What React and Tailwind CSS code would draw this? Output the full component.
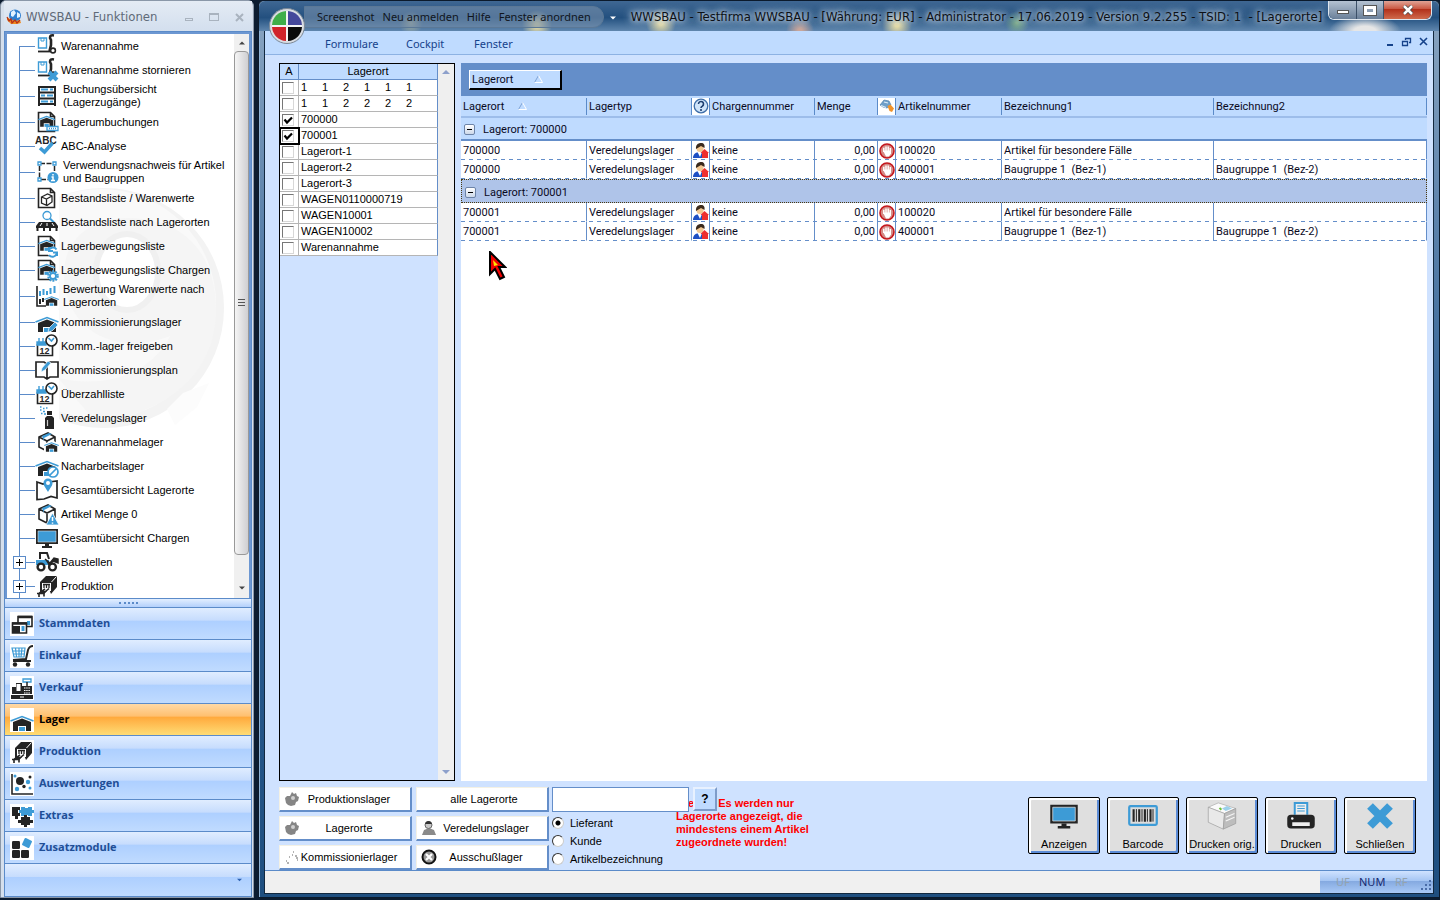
import { useState } from "react";

const K = "#242424";
const B = "#3d9bd6";

/* Shared drawing parts, all on a 24x24 grid */
const Cross = () => (
  <path d="M14 14l8 8M22 14l-8 8" stroke={B} strokeWidth="4" fill="none" />
);

const Truck = () => (
  <>
    <path d="M3.500 4h8v10h-8z" fill="#fff" stroke={B} strokeWidth="1.400" />
    <path d="M6 4v3h3V4" fill="none" stroke={B} strokeWidth="1" />
    <path d="M19 1.500c-3-.500-4 0-4 2.500l1 2v5l-1.500 6" fill="none" stroke={K} strokeWidth="2.600" />
    <path d="M3 17.500h12" stroke={K} strokeWidth="1.800" />
    <circle cx="18" cy="16.500" r="2.400" fill="#fff" stroke={K} strokeWidth="1.600" />
  </>
);

const Page = () => (
  <path d="M3.500 2.500h12l4 4v15h-16zM15.500 2.500v4h4" fill="#fff" stroke={K} strokeWidth="1.600" />
);

const House = ({ t = "" }) => (
  <g transform={t}>
    <path d="M3 13l9-3.500 9 3.500v9h-5v-5H8v5H3z" fill={K} />
    <path d="M.5 12L12 7.500 23.500 12" fill="none" stroke={B} strokeWidth="1.600" />
    <path d="M9 18h6v4H9z" fill={B} />
  </g>
);

const Crate = () => (
  <>
    <path d="M4 7l9-4 7 4v9l-8 5-8-4zM4 7l8 4 8-4M12 11v10" fill="#fff" stroke={K} strokeWidth="1.600" />
    <path d="M7 6l7-3 3 1-8 4v3" fill={B} />
  </>
);

const Calendar = () => (
  <>
    <path d="M2.500 10v11.500h15V11" fill="#fff" stroke={K} strokeWidth="1.600" />
    <path d="M2 8h9v3H2zM4 4v5M8 4v5" fill={B} stroke={B} strokeWidth="1.400" />
    <text x="4.500" y="20" fontSize="9" fontWeight="bold" fontFamily="Liberation Sans" fill={K}>
      12
    </text>
    <circle cx="16.500" cy="6.500" r="5.500" fill="#fff" stroke={K} strokeWidth="1.600" />
    <path d="M13.500 4l3 3L19 4" fill="none" stroke={B} strokeWidth="1.600" />
  </>
);

const Pencil = () => (
  <path d="M13 22l1-4 6-6 3 3-6 6z" fill={B} stroke="#fff" strokeWidth=".7" />
);

const Machine = () => (
  <>
    <path d="M5 8l6-6h11v11l-6 7H5z" fill={K} />
    <path d="M7 9h9v8H7z" fill="#fff" />
    <path d="M16.500 8l5-5.500" stroke="#fff" strokeWidth="1" />
    <path d="M9 10v4M11.500 10v4M14 10v4M8 10.500h7" stroke={K} strokeWidth="1.300" />
    <path d="M14 15l-6 6H2v3h14v-4z" fill="#fff" />
    <path d="M14 14.500l-6 5H3M10 15l-6 4.500v3.500M2 19.500h3M9 18.500v4" fill="none" stroke={K} strokeWidth="1.600" />
  </>
);

const Monitor = () => (
  <>
    <path d="M1 3h22v15H1z" fill={K} />
    <path d="M3 5h18v11H3z" fill={B} stroke="#ddd" strokeWidth=".6" />
    <path d="M10 18h4v2h3v2H7v-2h3z" fill={K} />
  </>
);

const GearBadge = () => (
  <>
    <circle cx="18" cy="18" r="4.600" fill="#fff" stroke={B} strokeWidth="2.400" strokeDasharray="1.800 1.100" />
    <circle cx="18" cy="18" r="3" fill="#fff" stroke={B} strokeWidth="1.800" />
  </>
);

const drawings = {
  receive: <Truck />,
  receiveCancel: (
    <>
      <Truck />
      <Cross />
    </>
  ),
  shelf: (
    <>
      <path d="M4 22V3h16v19M4 8.500h16M4 14.500h16M4 20h16" fill="none" stroke={K} strokeWidth="2" />
      <path d="M6 5.500h7M15 5.500h3M6 11.500h4M12 11.500h6M6 17.500h7M15 17.500h3" stroke={B} strokeWidth="2.200" />
    </>
  ),
  transfer: (
    <>
      <Page />
      <House t="translate(3 1) scale(.72)" />
      <path d="M12 16.500h11v4H12z" fill="#fff" stroke={B} strokeWidth="1.300" />
      <path d="M14 18.500h8" stroke={B} strokeWidth="1.500" strokeDasharray="1 1" />
    </>
  ),
  abc: (
    <>
      <text x="0" y="10" fontSize="10" fontWeight="bold" fontFamily="Liberation Sans" fill={K}>
        ABC
      </text>
      <path d="M5 14l4.500 4 8-9" fill="none" stroke={B} strokeWidth="3.600" />
    </>
  ),
  usage: (
    <>
      <path d="M5 3.500h14M4.500 6v12M6 19.500h7M19.500 6v6" fill="none" stroke={K} strokeWidth="1.500" strokeDasharray="5 1.500" />
      <path d="M3 2h3v3H3zM18 2h3v3h-3zM3 18h3v3H3z" fill="#fff" stroke={B} strokeWidth="1.300" />
      <circle cx="18" cy="17.500" r="5.500" fill={B} />
      <path d="M18 14v1.500M16.500 17h1.500v3.500M16 20.500h4" stroke="#fff" strokeWidth="1.500" fill="none" />
    </>
  ),
  stockValue: (
    <>
      <Page />
      <path d="M6.500 11l6-3 4.500 2v6l-5 3.500-5.500-2.500zM6.500 11l5 2 5.500-3M11.500 13v6" fill="#fff" stroke={K} strokeWidth="1.300" />
    </>
  ),
  stockPlace: (
    <>
      <circle cx="12" cy="5.500" r="4" fill="#fff" stroke={B} strokeWidth="1.300" />
      <path d="M15 8.500l4 4" stroke={B} strokeWidth="2" />
      <path d="M4 12h16l3 4v2H1v-2z" fill={K} />
      <path d="M7 13l-2 3M12 13v3M17 13l2 3" stroke="#fff" strokeWidth="1" />
      <path d="M2.500 18v3M9 18v3M15 18v3M21.500 18v3" stroke={K} strokeWidth="2" />
    </>
  ),
  moves: (
    <>
      <Page />
      <House t="translate(3 1) scale(.72)" />
      <circle cx="18" cy="18" r="5.500" fill="#fff" />
      <path d="M13.500 17a4.500 4.500 0 0 1 8-1.500M22 19a4.500 4.500 0 0 1-8 2M14 13v4h4M22 22v-3.500h-4" fill="none" stroke={B} strokeWidth="2" />
    </>
  ),
  movesBatch: (
    <>
      <Page />
      <House t="translate(3 1) scale(.72)" />
      <GearBadge />
    </>
  ),
  valuation: (
    <>
      <path d="M2 2v20h9" fill="none" stroke={K} strokeWidth="1.600" />
      <path d="M5 7v5M8.500 5v6M12 7v4M15.500 4v6M19.500 2v7" stroke={B} strokeWidth="2" />
      <path d="M5 15v5M8 14v4" stroke={K} strokeWidth="2" />
      <House t="translate(9 8) scale(.63)" />
    </>
  ),
  picking: (
    <>
      <House />
      <Pencil />
    </>
  ),
  calendar: <Calendar />,
  plan: (
    <>
      <path d="M1 4h8l3 2 3-2h8v15h-8l-3 2-3-2H1zM12 6v14" fill="#fff" stroke={K} strokeWidth="1.700" />
      <path d="M6 14l1-4 6-7 3 2-6 7z" fill={B} stroke="#fff" strokeWidth=".7" />
    </>
  ),
  spray: (
    <>
      <path d="M10 12l2-2h5l2 2v11h-9z" fill={K} />
      <path d="M12 5h5v4h-5z" fill={K} />
      <path d="M12.500 14v6" stroke="#ccc" strokeWidth="1.200" />
      <path d="M5 1h1.500M8 2.500h1.500M5 4h1.500M8 5.500h2M6 7.500h1.500M9 8h2M11 2h1.500" stroke={B} strokeWidth="1.500" />
    </>
  ),
  crateHouse: (
    <>
      <Crate />
      <path d="M9 14l8-4 7 4v10H9z" fill="#fff" />
      <House t="translate(9 8) scale(.63)" />
    </>
  ),
  rework: (
    <>
      <House />
      <circle cx="18" cy="18" r="5" fill="#fff" stroke={B} strokeWidth="1.700" />
      <path d="M14.500 21.500l7-7" stroke={B} strokeWidth="1.700" />
    </>
  ),
  map: (
    <>
      <path d="M2 4l6 2 6-2 8-1v17l-6-1.500-7 2.500-7 .500z" fill="#fff" stroke={K} strokeWidth="1.700" />
      <path d="M13 14C10 9 8.500 7.500 8.500 5a4.500 4.500 0 0 1 9 0c0 2.500-1.500 4-4.500 9z" fill={B} />
      <circle cx="13" cy="5" r="2" fill="#fff" />
    </>
  ),
  crateAlert: (
    <>
      <Crate />
      <path d="M17.500 11l6.500 12H11z" fill={B} stroke="#fff" strokeWidth=".8" />
      <path d="M17.500 15v4M17.500 20.500v1.200" stroke="#fff" strokeWidth="1.500" />
    </>
  ),
  monitor: <Monitor />,
  loader: (
    <>
      <path d="M5 9V3h7l2 6" fill="#fff" stroke={K} strokeWidth="2" />
      <path d="M1 10h13v5H1z" fill={B} />
      <path d="M10 9l5 4 4-5 4 1v4l-5-2-4 5" fill={K} stroke={K} strokeWidth="1.500" />
      <circle cx="6" cy="17" r="3.400" fill="#fff" stroke={K} strokeWidth="2.400" />
      <circle cx="17.500" cy="17" r="3.400" fill="#fff" stroke={K} strokeWidth="2.400" />
    </>
  ),
  machine: <Machine />,
  cards: (
    <>
      <path d="M8 4.500h14v10H8z" fill="#fff" stroke={K} strokeWidth="1.600" />
      <path d="M8 5h14" stroke={K} strokeWidth="2.500" />
      <path d="M17 9h3v4h-3z" fill={B} />
      <path d="M2.500 11h14v10h-14z" fill="#fff" stroke={K} strokeWidth="1.600" />
      <path d="M2 11.500h15" stroke={K} strokeWidth="2.500" />
      <path d="M3 14h7v7H3z" fill={K} />
      <path d="M11.500 14h3v5h-3z" fill={B} />
    </>
  ),
  cart: (
    <>
      <path d="M2 4h13l-1 9H4zM5.500 4l1 9M9 4v9M12 4l-1 9M2 7h13M3 10h12" fill="none" stroke={B} strokeWidth="1.200" />
      <path d="M23 2c-3 0-4 1-5 4l-2 9-13 1M3 17h18" fill="none" stroke={K} strokeWidth="2" />
      <circle cx="5" cy="20.500" r="2.200" fill={K} />
      <circle cx="18" cy="20.500" r="2.200" fill={K} />
    </>
  ),
  register: (
    <>
      <path d="M13 3h8v3h-8z" fill="#fff" stroke={B} strokeWidth="1.300" />
      <path d="M17 6v4" stroke={K} strokeWidth="1.500" />
      <path d="M2 11h4V7h6v3h10v8H2zM1 19h22v4H1z" fill={K} />
      <path d="M6.500 8h4v7h-4z" fill="#fff" />
      <path d="M14 12h6M14 14.500h6M14 17h6" stroke="#fff" strokeWidth="1.200" strokeDasharray="1.500 .700" />
      <path d="M10 21h4" stroke="#fff" strokeWidth="1" />
    </>
  ),
  house: <House t="translate(0 1)" />,
  scatter: (
    <>
      <path d="M2 2v20h21" fill="none" stroke={K} strokeWidth="1.600" />
      <circle cx="10" cy="9" r="4" fill={K} />
      <circle cx="14" cy="14.500" r="1.700" fill={K} />
      <circle cx="20" cy="5" r="1.500" fill={K} />
      <circle cx="18" cy="10" r="2.200" fill={B} />
      <circle cx="7" cy="17" r="2.200" fill={B} />
      <circle cx="5" cy="4" r="1.500" fill={B} />
      <circle cx="20" cy="16" r="1.500" fill={B} />
    </>
  ),
  puzzle: (
    <>
      <path d="M2 3h8v3H8v3h2v3H8v3H5v-3H2z" fill={K} />
      <path d="M11 3h4v1h3V3h4v3h2v3h-2v3h-4v-1h-3v1h-4V9H9V6h2z" fill={B} />
      <path d="M11 13h3v-2h3v2h3v3h3v3h-3v2h-3v2h-3v-2h-3v-2H8v-3h3z" fill={K} />
    </>
  ),
  modules: (
    <>
      <rect x="2" y="5" width="8" height="8" rx="1.200" fill={K} />
      <rect x="2" y="14" width="8" height="8" rx="1.200" fill={K} />
      <rect x="11" y="14" width="8" height="8" rx="1.200" fill={K} />
      <rect x="13" y="3" width="8" height="8" rx="1" fill={B} transform="rotate(25 17 7)" />
    </>
  ),
  barcode: (
    <>
      <rect x="1" y="4" width="22" height="15" rx="1" fill="#ddd" stroke={B} strokeWidth="1.800" />
      <path d="M4.500 6.500v10M9 6.500v10M13.500 6.500v10M18 6.500v10" stroke={K} strokeWidth="1.700" />
      <path d="M6.700 6.500v10M11.200 6.500v10M15.500 6.500v10M20 6.500v10" stroke={K} strokeWidth=".8" />
    </>
  ),
  printer: (
    <>
      <path d="M7 11V1.500h10V11" fill="#eee" stroke={B} strokeWidth="1.600" />
      <path d="M9 4h6M9 6h6M9 8h6" stroke={B} strokeWidth=".9" />
      <rect x="1" y="11" width="22" height="11" rx="3" fill={K} />
      <path d="M5 17h14v3H5z" fill="#eee" />
      <circle cx="5" cy="14" r="1" fill="#fff" />
    </>
  ),
  laser: (
    <>
      <path d="M1 5l8-3.500L23 6v12l-10 4.500L1 17z" fill="#c9c9c9" />
      <path d="M1 5l8-3.500L23 6l-9 4z" fill="#fafafa" stroke="#aaa" strokeWidth=".5" />
      <path d="M1 5l13 5-1 12.500L1 17z" fill="#e9e9e9" stroke="#999" strokeWidth=".5" />
      <path d="M14 10l9-4v12l-10 4.500z" fill="#bdbdbd" stroke="#999" strokeWidth=".5" />
      <path d="M12 6l4-2 4 2-5 2z" fill="#9cd0ea" />
      <path d="M15 13l7-3M15 16l7-3" stroke="#f5f5f5" strokeWidth="1" />
      <path d="M10 5.500l1.500 1.500" stroke="#6cbf3a" strokeWidth="1.600" />
    </>
  ),
  close: <path d="M4 4l16 16M20 4L4 20" stroke={B} strokeWidth="6.500" />,
};

const Icon = ({ name, className }) => (
  <svg viewBox="0 0 24 24" className={className} aria-hidden="true">
    {drawings[name]}
  </svg>
);

const functions = [
  { label: ["Warenannahme"], icon: "receive" },
  { label: ["Warenannahme stornieren"], icon: "receiveCancel" },
  { label: ["Buchungsübersicht", "(Lagerzugänge)"], icon: "shelf" },
  { label: ["Lagerumbuchungen"], icon: "transfer" },
  { label: ["ABC-Analyse"], icon: "abc" },
  { label: ["Verwendungsnachweis für Artikel", "und Baugruppen"], icon: "usage" },
  { label: ["Bestandsliste / Warenwerte"], icon: "stockValue" },
  { label: ["Bestandsliste nach Lagerorten"], icon: "stockPlace" },
  { label: ["Lagerbewegungsliste"], icon: "moves" },
  { label: ["Lagerbewegungsliste Chargen"], icon: "movesBatch" },
  { label: ["Bewertung Warenwerte nach", "Lagerorten"], icon: "valuation" },
  { label: ["Kommissionierungslager"], icon: "picking" },
  { label: ["Komm.-lager freigeben"], icon: "calendar" },
  { label: ["Kommissionierungsplan"], icon: "plan" },
  { label: ["Überzahlliste"], icon: "calendar" },
  { label: ["Veredelungslager"], icon: "spray" },
  { label: ["Warenannahmelager"], icon: "crateHouse" },
  { label: ["Nacharbeitslager"], icon: "rework" },
  { label: ["Gesamtübersicht Lagerorte"], icon: "map" },
  { label: ["Artikel Menge 0"], icon: "crateAlert" },
  { label: ["Gesamtübersicht Chargen"], icon: "monitor" },
  { label: ["Baustellen"], icon: "loader", node: true },
  { label: ["Produktion"], icon: "machine", node: true },
];

const modules = [
  { label: "Stammdaten", icon: "cards" },
  { label: "Einkauf", icon: "cart" },
  { label: "Verkauf", icon: "register" },
  { label: "Lager", icon: "house" },
  { label: "Produktion", icon: "machine" },
  { label: "Auswertungen", icon: "scatter" },
  { label: "Extras", icon: "puzzle" },
  { label: "Zusatzmodule", icon: "modules" },
];

const places = [
  ["1", "1", "2", "1", "1", "1"],
  ["1", "1", "2", "2", "2", "2"],
  "700000",
  "700001",
  "Lagerort-1",
  "Lagerort-2",
  "Lagerort-3",
  "WAGEN0110000719",
  "WAGEN10001",
  "WAGEN10002",
  "Warenannahme",
];

const groups = [
  {
    place: "700000",
    rows: [
      ["100020", "Artikel für besondere Fälle", ""],
      ["400001", "Baugruppe 1  (Bez-1)", "Baugruppe 1  (Bez-2)"],
    ],
  },
  {
    place: "700001",
    rows: [
      ["100020", "Artikel für besondere Fälle", ""],
      ["400001", "Baugruppe 1  (Bez-1)", "Baugruppe 1  (Bez-2)"],
    ],
  },
];

const AppLogo = () => (
  <svg viewBox="0 0 16 16" className="h-4 w-4 shrink-0">
    <circle cx="9" cy="6.500" r="6" fill="#2f7fd0" />
    <path d="M5 3l3-2 2 3-3 4-2-1zM11 3l3 2v3l-3 1z" fill="#e3f2ff" />
    <path d="M1 8l3 2 5 2 5-1 1 3-4 1-6 0-4-4z" fill="#f08a1c" />
    <path d="M1 8l2 4 2-2 1 4 3-3 2 3 3-3" fill="none" stroke="#b5301a" strokeWidth="1.200" />
  </svg>
);

const Watermark = () => (
  <svg viewBox="51 0 172 567" className="absolute top-0 left-[51px] h-[567px] w-[172px]">
    <circle cx="97" cy="274" r="120" fill="#f3f3f3" />
    <circle cx="94" cy="270" r="115" fill="#f9f9f9" />
    <path d="M121 184c54 0 88 34 88 92 0 64-50 104-120 112l-38-44c52 12 96-8 112-42-56 22-106-8-106-62 0-34 26-56 64-56z" fill="#f5f5f5" />
    <ellipse cx="120" cy="238" rx="31" ry="38" fill="#fff" stroke="#f0f0f0" strokeWidth="6" />
    <path d="M160 375l16-16 26-10-12 24-22 18z" fill="#fcfcfc" />
  </svg>
);

const TreeRow = ({ item, first }) => (
  <li className={`flex shrink-0 items-center ${item.label.length > 1 ? "h-7" : "h-6"}`}>
    <div className="flex h-full w-7 shrink-0 flex-col pl-3">
      <div className={`flex-1 ${first ? "" : "border-l border-[#5b8bc9]"}`} />
      <div className="border-t border-[#5b8bc9]" />
      <div className="flex-1 border-l border-[#5b8bc9]" />
    </div>
    {item.node && (
      <button
        type="button"
        aria-label={`${item.label[0]} öffnen`}
        className="relative -ml-[22px] mr-[9px] flex h-[13px] w-[13px] shrink-0 items-center justify-center border border-[#5b8bc9] bg-white"
      >
        <svg viewBox="0 0 7 7" className="h-[7px] w-[7px] shrink-0">
          <path d="M0 3.500h7M3.500 0v7" stroke="#000" />
        </svg>
      </button>
    )}
    <a href="#" className="relative flex items-center whitespace-pre">
      <Icon name={item.icon} className="h-6 w-6 bg-white" />
      <span className={`leading-[13px] ${item.label.length > 1 ? "pl-1" : "pl-[2px]"}`}>
        {item.label.join("\n")}
      </span>
    </a>
  </li>
);

const Arrow = ({ up, className = "w-2" }) => (
  <svg viewBox="0 0 8 4" className={`h-1 ${className}`}>
    <path d={up ? "M0 4l4-4 4 4z" : "M0 0h8L4 4z"} fill="currentColor" />
  </svg>
);

const FunctionsWindow = () => {
  const [active, setActive] = useState("Lager");

  return (
    <aside className="flex w-[254px] shrink-0 flex-col rounded-t-md border border-[#8a97a8] bg-[#d5dfec] pr-px pl-[3px]">
      <header className="flex h-[30px] shrink-0 items-center bg-linear-to-b from-[#e4ebf4] to-[#d3dfee] px-[2px] pt-[2px] text-[13px] text-[#5f6a78] [font-family:'DejaVu_Sans_Condensed','DejaVu_Sans',sans-serif]">
        <AppLogo />
        <h1 className="flex-1 pl-1">WWSBAU - Funktionen</h1>
        <div className="flex items-center gap-4 pr-[6px] text-[#a9b3bf]">
          <button type="button" aria-label="Minimieren" className="mt-1 h-[3px] w-2 border border-current" />
          <button type="button" aria-label="Maximieren" className="h-2 w-[10px] border border-t-2 border-current" />
          <button type="button" aria-label="Schließen">
            <svg viewBox="0 0 9 9" className="h-[9px] w-[9px]">
              <path d="M1 1l7 7M8 1L1 8" stroke="currentColor" strokeWidth="2" />
            </svg>
          </button>
        </div>
      </header>

      <div className="flex min-h-0 flex-1 flex-col border border-[#5b8bc9]">
        <div className="flex min-h-0 flex-1 border-2 border-[#6c97d2] border-b-0 bg-white">
          <div className="relative min-w-0 flex-1 overflow-hidden">
            <Watermark />
            <ul className="relative flex flex-col text-[11px] text-black">
              {functions.map((item, i) => (
                <TreeRow key={item.icon + i} item={item} first={i === 0} />
              ))}
            </ul>
          </div>
          <div className="flex w-[15px] shrink-0 flex-col items-center bg-[#f0f0f0] text-[#444]">
            <div className="flex h-[17px] items-center">
              <Arrow up className="w-[6px]" />
            </div>
            <div className="flex w-full flex-1 flex-col items-center justify-center gap-px rounded-sm border border-[#999] bg-linear-to-r from-[#f5f5f5] to-[#cfcfd2]">
              <i className="h-[2px] w-[7px] border-t border-[#555]" />
              <i className="h-[2px] w-[7px] border-t border-[#555]" />
              <i className="h-[2px] w-[7px] border-t border-[#555]" />
            </div>
            <div className="flex h-[43px] items-end pb-2">
              <Arrow className="w-[6px]" />
            </div>
          </div>
        </div>

        <div className="flex h-[9px] shrink-0 items-center justify-center border-t border-[#5b8bc9] bg-linear-to-b from-[#e3efff] to-[#b3d0fb]">
          <i className="w-[19px] border-t-2 border-dotted border-[#5b8bc9]" />
        </div>

        <nav className="flex shrink-0 flex-col text-[11px] font-bold [font-family:'Open_Sans',sans-serif]">
          {modules.map(({ label, icon }) => (
            <button
              key={label}
              type="button"
              onClick={() => setActive(label)}
              className={`flex h-8 items-center gap-[5px] border-t border-[#5b8bc9] pl-[5px] text-left ${
                active === label
                  ? "bg-[linear-gradient(#ffd9a6,#ffbf6e_40%,#ffa83b_41%,#fedc75)] text-black"
                  : "bg-[linear-gradient(#e0edff,#c6dcfd_40%,#adcfff_41%,#c0dbff)] text-[#1f4e96]"
              }`}
            >
              <Icon name={icon} className="h-6 w-6 bg-white" />
              {label}
            </button>
          ))}
          <div className="flex h-[33px] items-center justify-end border-t border-[#5b8bc9] bg-[linear-gradient(#e0edff,#c6dcfd_40%,#adcfff_41%,#c0dbff)] pr-[9px] text-[#2f62b0]">
            <Arrow className="w-[5px]" />
          </div>
        </nav>
      </div>
    </aside>
  );
};

const Orb = () => (
  <svg viewBox="0 0 36 36" className="absolute top-[7px] left-[10px] z-10 h-9 w-9">
    <circle cx="18" cy="18" r="17.500" fill="#d9dde3" stroke="#7b8896" />
    <circle cx="18" cy="18" r="15" fill="#f4f4f4" />
    <path d="M17 3v14H3A15 15 0 0 1 17 3z" fill="#3fae49" />
    <path d="M19 3v14h14A15 15 0 0 0 19 3z" fill="#45489b" />
    <path d="M17 33V19H3a15 15 0 0 0 14 14z" fill="#d0232a" />
    <path d="M19 33V19h14a15 15 0 0 1-14 14z" fill="#0b0b0b" />
  </svg>
);

const TitleBar = () => (
  <header className="relative flex h-[30px] shrink-0 items-start rounded-t-md bg-[radial-gradient(circle_at_152px_22px,#d8cf9a99_0,transparent_12px),radial-gradient(circle_at_278px_24px,#e3d9a4_2px,transparent_15px),radial-gradient(circle_at_402px_22px,#e3d9a4_2px,transparent_15px),radial-gradient(circle_at_541px_30px,#c9a59a_2px,transparent_14px),radial-gradient(circle_at_638px_24px,#e3d9a4_2px,transparent_15px),radial-gradient(circle_at_758px_22px,#7fae8a_0,transparent_12px),radial-gradient(ellipse_36px_16px_at_1106px_30px,#e6e6e6_30%,transparent),linear-gradient(#3f6793,#23507f_55%,#5f86ae)] [font-family:'DejaVu_Sans_Condensed','DejaVu_Sans',sans-serif]">
    <Orb />
    <div className="mt-[5px] ml-[45px] flex h-[22px] items-center gap-2 rounded-r-full border border-[#5b7896] bg-[#7790ac]/60 pr-3 pl-3 text-[11px] text-[#10151c] [font-family:'Noto_Sans',sans-serif]">
      <button type="button">Screenshot</button>
      <button type="button">Neu anmelden</button>
      <button type="button">Hilfe</button>
      <button type="button">Fenster anordnen</button>
    </div>
    <Arrow className="mt-[15px] ml-[6px] w-[6px] text-white" />
    <h1 className="mt-[6px] ml-[15px] min-w-0 flex-1 text-[13px] leading-[19px] whitespace-pre text-[#0d1116] [text-shadow:0_0_5px_#c8d6e6,0_0_8px_#c8d6e6,0_0_10px_#c8d6e6]">
      {"WWSBAU - Testfirma WWSBAU - [Währung: EUR] - Administrator - 17.06.2019 - Version 9.2.255 - TSID: 1  - [Lagerorte]"}
    </h1>
    <div className="mr-[7px] flex h-[19px] shrink-0 rounded-b-md border border-t-0 border-[#dfe6ee]">
      <button type="button" aria-label="Minimieren" className="flex w-7 items-center justify-center rounded-bl-md border-r border-[#3c5068] bg-linear-to-b from-[#b4c2d2] to-[#6b8099]">
        <i className="mt-1 h-1 w-3 border border-[#555] bg-white" />
      </button>
      <button type="button" aria-label="Maximieren" className="flex w-[27px] items-center justify-center border-r border-[#3c5068] bg-linear-to-b from-[#b4c2d2] to-[#6b8099]">
        <i className="h-[9px] w-3 border-[3px] border-white outline outline-[#555]" />
      </button>
      <button type="button" aria-label="Schließen" className="flex w-[47px] items-center justify-center rounded-br-md bg-[linear-gradient(#e0a395,#c9553f_45%,#b2301a_46%,#cf6a4c)]">
        <svg viewBox="0 0 12 10" className="h-[10px] w-3">
          <path d="M2 1l8 8M10 1L2 9" stroke="#444" strokeWidth="4" />
          <path d="M2 1l8 8M10 1L2 9" stroke="#fff" strokeWidth="2.500" />
        </svg>
      </button>
    </div>
  </header>
);

const MenuBar = () => (
  <nav className="flex h-6 shrink-0 items-center border-b border-[#8db2e3] bg-[#bfdbff] pt-[3px] pl-[60px] text-[11px] text-[#15428b] [font-family:'Noto_Sans',sans-serif]">
    <button type="button" className="w-[81px] text-left">Formulare</button>
    <button type="button" className="w-[68px] text-left">Cockpit</button>
    <button type="button" className="flex-1 text-left">Fenster</button>
    <svg viewBox="0 0 42 10" className="mr-1 mb-1 h-[10px] w-[42px]">
      <path d="M0 8h6" stroke="#15428b" strokeWidth="2" />
      <path d="M18.500 3V1.500h5v4H22M15.500 4.500h5v4h-5zM18 1.500h6M15 4.500h6" fill="none" stroke="#15428b" strokeWidth="1.300" />
      <path d="M33 1l7 7M40 1l-7 7" stroke="#15428b" strokeWidth="1.600" />
    </svg>
  </nav>
);

const PlaceList = () => {
  const [checked, setChecked] = useState(["700000", "700001"]);

  const toggle = (name) =>
    setChecked((old) => (old.includes(name) ? old.filter((n) => n !== name) : [...old, name]));

  return (
    <div className="flex w-44 shrink-0 border border-black bg-[#cfe2ff]">
      <div className="flex-1">
        <table className="w-full table-fixed border-separate border-spacing-0 text-[11px] leading-[15px] text-black">
          <colgroup>
            <col className="w-[19px]" />
            <col />
          </colgroup>
          <thead>
            <tr className="bg-[#bfdbff]">
              <th className="h-4 border-r border-b border-[#648ec9] p-0 font-normal">A</th>
              <th className="h-4 border-r border-b border-[#648ec9] p-0 font-normal">Lagerort</th>
            </tr>
          </thead>
          <tbody>
            {places.map((place, i) => {
              const name = Array.isArray(place) ? place.join(" ") : place;
              return (
                <tr key={name} className="bg-white">
                  <td className={`h-4 border-r border-b border-[#b5b5b5] p-0 ${i === 3 ? "outline-2 -outline-offset-1 outline-black" : ""}`}>
                    <input
                      type="checkbox"
                      id={`place-${i}`}
                      checked={checked.includes(name)}
                      onChange={() => toggle(name)}
                      className="peer sr-only"
                    />
                    <label
                      htmlFor={`place-${i}`}
                      aria-label={name}
                      className="ml-[2px] block h-3 w-3 border border-[#d8d8d8] border-t-[#777] border-l-[#777] bg-white text-transparent peer-checked:text-black"
                    >
                      <svg viewBox="0 0 10 10" className="h-[10px] w-[10px]">
                        <path d="M1.500 4.500l2.500 3 5-5" fill="none" stroke="currentColor" strokeWidth="2.200" />
                      </svg>
                    </label>
                  </td>
                  <td className="h-4 border-r border-b border-[#b5b5b5] border-r-[#648ec9] p-0 pl-[2px]">
                    {Array.isArray(place) ? (
                      <div className="flex">
                        {place.map((n, j) => (
                          <span key={j} className="w-[21px]">{n}</span>
                        ))}
                      </div>
                    ) : (
                      place
                    )}
                  </td>
                </tr>
              );
            })}
          </tbody>
        </table>
      </div>
      <div className="flex w-4 shrink-0 flex-col items-center justify-between bg-[#efefef] py-[6px] text-[#8da0cb]">
        <Arrow up />
        <Arrow />
      </div>
    </div>
  );
};

const SortMark = ({ className = "" }) => (
  <svg viewBox="0 0 9 8" className={`inline-block h-2 w-[9px] ${className}`}>
    <path d="M.5 7.500L4.500.5" stroke="#7fa3d6" />
    <path d="M4.500.5l4 7h-8" fill="none" stroke="#fff" />
  </svg>
);

const Person = () => (
  <svg viewBox="0 0 16 16" className="mx-auto h-4 w-4">
    <path d="M0 15c0-4 3-6 7-6s6 2 6 6z" fill="#1d4fc4" />
    <path d="M4.500 9l2.500 5 2-5z" fill="#fff" />
    <circle cx="7" cy="5.500" r="3.500" fill="#f3c892" />
    <path d="M3 6C2.500 2 5 0 8 0s4 2 3.500 5L8 3z" fill="#3a2a1c" />
    <path d="M11.500 6l4.500 4h-1v5h-6v-5H7.500z" fill="#ee2f2f" />
  </svg>
);

const Hand = () => (
  <svg viewBox="0 0 16 16" className="mx-auto h-4 w-4">
    <circle cx="8" cy="8" r="7" fill="#d58a85" stroke="#c4161c" strokeWidth="1.600" />
    <path d="M4.800 9V4.800M7 8V3.500M9.200 8V3.500M11.300 8.500V5" stroke="#fff" strokeWidth="1.500" />
    <path d="M4 7.500h8v3l-2 3H7z" fill="#fff" />
  </svg>
);

const HelpIcon = () => (
  <svg viewBox="0 0 16 16" className="mx-auto h-4 w-4">
    <circle cx="8" cy="8" r="6.800" fill="#cfe4fa" stroke="#3f6ea8" strokeWidth="1.300" />
    <path d="M5.500 6a2.500 2.500 0 1 1 4 2c-1 .8-1.500 1-1.500 2M8 11v2" fill="none" stroke="#1e3f70" strokeWidth="1.600" />
  </svg>
);

const TagIcon = () => (
  <svg viewBox="0 0 16 16" className="mx-auto h-4 w-4">
    <path d="M1 7l4-5 5 1 2 4-4 3-4-1z" fill="#6f9fc8" stroke="#4c7fae" strokeWidth=".7" />
    <path d="M8.500 8l3-1.500 3.500 4-2 3.500-2.500-1z" fill="#f0932b" />
    <path d="M2 7.500l5 2M5 4l4 1" stroke="#dcecf8" strokeWidth="1.200" />
  </svg>
);

const columnHead = "h-[22px] border-b-2 border-[#9dbdea] p-0 text-left font-normal";
const headCell = "flex h-[17px] items-center border-r border-[#5b8bc9] pl-[2px]";
const cell = "h-[19px] border-r border-b border-[#648ec9] border-b-transparent p-0 pl-[2px]";

const StockGrid = () => (
  <div className="min-w-0 flex-1 overflow-hidden bg-white text-[11px] leading-[15px] text-[#0a0a1e] [font-family:'Roboto',sans-serif]">
    <div className="flex h-[33px] items-center bg-[#648ec9] pl-2">
      <button type="button" className="flex h-5 w-[93px] items-center justify-between border border-r-2 border-b-2 border-white border-r-black border-b-black bg-[#bfdbff] pr-[17px] pl-[2px]">
        Lagerort
        <SortMark />
      </button>
    </div>
    <table className="w-full table-fixed border-separate border-spacing-0 whitespace-pre">
      <colgroup>
        <col className="w-[126px]" />
        <col className="w-[105px]" />
        <col className="w-[18px]" />
        <col className="w-[105px]" />
        <col className="w-[63px]" />
        <col className="w-[18px]" />
        <col className="w-[106px]" />
        <col className="w-[212px]" />
        <col />
      </colgroup>
      <thead>
        <tr className="bg-[#bfdbff]">
          <th className={columnHead}>
            <div className={headCell}>
              Lagerort
              <SortMark className="ml-[14px]" />
            </div>
          </th>
          <th className={columnHead}><div className={headCell}>Lagertyp</div></th>
          <th className={columnHead}><div className="h-[17px] border-r border-[#5b8bc9] bg-white"><HelpIcon /></div></th>
          <th className={columnHead}><div className={headCell}>Chargennummer</div></th>
          <th className={columnHead}><div className={headCell}>Menge</div></th>
          <th className={columnHead}><div className="h-[17px] border-r border-[#5b8bc9] bg-white"><TagIcon /></div></th>
          <th className={columnHead}><div className={headCell}>Artikelnummer</div></th>
          <th className={columnHead}><div className={headCell}>Bezeichnung1</div></th>
          <th className={columnHead}><div className={headCell}>Bezeichnung2</div></th>
        </tr>
      </thead>
      {groups.map(({ place, rows }, g) => (
        <tbody key={place}>
          <tr>
            <td
              colSpan={9}
              className={`p-0 ${
                g === 1
                  ? "h-6 border border-dotted border-[#4a3a10] bg-[#afc4e9]"
                  : "h-[23px] border-b-2 border-[#648ec9] bg-[#bfdbff]"
              }`}
            >
              <button type="button" className="flex h-5 items-center gap-2 pt-[2px] pl-[3px]">
                <span className="flex h-[11px] w-[11px] items-center justify-center rounded-xs border border-[#6d84a8] bg-linear-to-b from-white to-[#cdd9ea]">
                  <i className="w-[5px] border-t border-black" />
                </span>
                Lagerort: {place}
              </button>
            </td>
          </tr>
          {rows.map(([article, text1, text2]) => (
            <tr
              key={article}
              className="bg-[repeating-linear-gradient(90deg,#648ec9_0_4px,#fff_4px_8px)] bg-[length:100%_1px] bg-bottom bg-no-repeat"
            >
              <td className={cell}>{place}</td>
              <td className={cell}>Veredelungslager</td>
              <td className="border-r border-[#648ec9] p-0"><Person /></td>
              <td className={cell}>keine</td>
              <td className={`${cell} pr-[2px] text-right`}>0,00</td>
              <td className="border-r border-[#648ec9] p-0"><Hand /></td>
              <td className={cell}>{article}</td>
              <td className={cell}>{text1}</td>
              <td className={cell}>{text2}</td>
            </tr>
          ))}
        </tbody>
      ))}
    </table>
  </div>
);

const GreyGlyph = ({ kind }) => (
  <svg viewBox="0 0 16 16" className="-mr-3 h-4 w-4 shrink-0">
    {kind === "gear" && (
      <>
        <path d="M1 7l2-2 3 0 2-4 2 2 2-1 1 3 2 1-1 4-2 1-1 3-4 1-3-1-2-2z" fill="#858585" />
        <circle cx="9" cy="7" r="2" fill="#cfcfcf" />
      </>
    )}
    {kind === "dots" && (
      <path d="M2 12h1M3 14h2M5 8h1M8 6h1M9 3h1M11 7h2M12 9h2M13 11h1" stroke="#999" strokeWidth="1.500" />
    )}
    {kind === "person" && (
      <>
        <path d="M1 15l2-5 5-2 5 2 2 5z" fill="#8a8a8a" />
        <circle cx="7.500" cy="5" r="3.500" fill="#c9c9c9" stroke="#666" />
        <path d="M4 4c1-4 6-4 7 0" fill="#333" />
      </>
    )}
    {kind === "cancel" && (
      <>
        <circle cx="8" cy="8" r="6.500" fill="#999" stroke="#111" strokeWidth="2" />
        <path d="M5 5l6 6M11 5l-6 6" stroke="#fff" strokeWidth="2.200" />
      </>
    )}
  </svg>
);

const filters = [
  { label: "Produktionslager", glyph: "gear" },
  { label: "alle Lagerorte" },
  { label: "Lagerorte", glyph: "gear" },
  { label: "Veredelungslager", glyph: "person" },
  { label: "Kommissionierlager", glyph: "dots" },
  { label: "Ausschußlager", glyph: "cancel" },
];

const actions = [
  { label: "Anzeigen", icon: "monitor" },
  { label: "Barcode", icon: "barcode" },
  { label: "Drucken orig.", icon: "laser" },
  { label: "Drucken", icon: "printer" },
  { label: "Schließen", icon: "close" },
];

const FilterBar = () => {
  const [search, setSearch] = useState("");
  const [kind, setKind] = useState("Lieferant");

  return (
    <div className="flex h-[89px] shrink-0 pt-[6px] pr-[17px] pl-[14px] text-[11px] text-black">
      <div className="grid shrink-0 grid-cols-[133px_133px] gap-x-1 gap-y-1 self-start">
        {filters.map(({ label, glyph }) => (
          <button
            key={label}
            type="button"
            className="flex h-[25px] items-center border border-r-2 border-b-2 border-[#f4f1e4] border-r-[#648ec9] border-b-[#648ec9] bg-white pl-1"
          >
            {glyph && <GreyGlyph kind={glyph} />}
            <span className="flex-1 text-center whitespace-nowrap">{label}</span>
          </button>
        ))}
      </div>

      <div className="relative z-10 ml-[3px] w-[137px] shrink-0">
        <input
          type="text"
          aria-label="Suchbegriff"
          value={search}
          onChange={(e) => setSearch(e.target.value)}
          className="block h-[25px] w-full border border-[#648ec9] bg-white px-1"
        />
        <div className="flex flex-col gap-1 pt-1">
          {["Lieferant", "Kunde", "Artikelbezeichnung"].map((name) => (
            <label key={name} className="flex h-[14px] items-center gap-[6px]">
              <input
                type="radio"
                name="kind"
                checked={kind === name}
                onChange={() => setKind(name)}
                className="h-3 w-3 appearance-none rounded-full border border-[#333] border-r-[#ccc] border-b-[#ccc] bg-white checked:bg-[radial-gradient(circle,#000_2px,#fff_3px)]"
              />
              {name}
            </label>
          ))}
        </div>
      </div>

      <button
        type="button"
        className="relative z-10 ml-1 h-6 w-6 shrink-0 border-2 border-[#e8f1ff] border-r-[#7d9cc9] border-b-[#7d9cc9] bg-[#bfdbff] text-[12px] font-bold"
      >
        ?
      </button>
      <p className="-ml-[41px] w-[160px] shrink-0 pt-[10px] leading-[13px] font-bold text-[#f00]">
        <span className="mr-6 ml-3">e</span>Es werden nur Lagerorte angezeigt, die
        mindestens einem Artikel zugeordnete wurden!
      </p>

      <div className="flex flex-1 justify-end gap-[7px] pt-[10px]">
        {actions.map(({ label, icon }) => (
          <button
            key={label}
            type="button"
            className="flex h-[57px] w-[72px] flex-col items-center justify-between rounded-xs border border-black bg-[#dfdfdf] pt-[3px] pb-[2px] whitespace-nowrap shadow-[inset_2px_2px_#fff,inset_-2px_-2px_#5b8bd6]"
          >
            <Icon name={icon} className="h-[30px] w-[30px]" />
            <span className="leading-[13px]">{label}</span>
          </button>
        ))}
      </div>
    </div>
  );
};

const StatusBar = () => (
  <footer className="flex h-[23px] shrink-0 border-t border-[#5b8bc9] bg-[#f0f0f0] text-[11px] [font-family:'Noto_Sans',sans-serif]">
    <div className="flex-1" />
    <div className="flex w-[113px] items-center bg-[linear-gradient(#cfe2ff,#a5c5f3_45%,#84a9e0_46%,#a9c9f6)] pl-4 text-[#94a3ae]">
      <span className="w-[23px]">UF</span>
      <span className="w-9 text-[#15286f]">NUM</span>
      <span className="flex-1">RF</span>
      <svg viewBox="0 0 11 11" className="mt-1 mr-px h-[11px] w-[11px]">
        <path d="M8 1h2v2H8zM4 5h2v2H4zM8 5h2v2H8zM0 9h2v2H0zM4 9h2v2H4zM8 9h2v2H8z" fill="#4a6da8" />
      </svg>
    </div>
  </footer>
);

const Pointer = () => (
  <svg viewBox="0 0 18 30" className="pointer-events-none absolute top-[196px] left-[224px] h-[30px] w-[18px]">
    <path d="M1 1v22l5-5 5 10 4-2-5-10h6z" fill="#f00000" stroke="#000" strokeWidth="2" />
    <path d="M4 9l5 5-4 1z" fill="#ffe600" />
  </svg>
);

const MainWindow = () => (
  <main className="flex min-w-0 flex-1 flex-col rounded-t-md border border-[#0b1a2c] bg-linear-to-b from-[#8ba6c2] via-[#2c5f94] to-[#1f4f80] shadow-[inset_1px_1px_#8fb3d6]">
    <TitleBar />
    <div className="mx-[6px] mb-1 flex min-h-0 flex-1 flex-col bg-[#cfe2ff] outline outline-[#12283f]">
      <MenuBar />
      <div className="relative flex min-h-0 flex-1 gap-[6px] pt-2 pr-[6px] pl-[14px]">
        <PlaceList />
        <StockGrid />
        <Pointer />
      </div>
      <FilterBar />
      <StatusBar />
    </div>
  </main>
);

export default function App() {
  return (
    <div className="flex h-screen w-full gap-1 bg-[#0c1c30] pb-[2px] [font-family:'Liberation_Sans',Arial,sans-serif]">
      <FunctionsWindow />
      <MainWindow />
    </div>
  );
}
